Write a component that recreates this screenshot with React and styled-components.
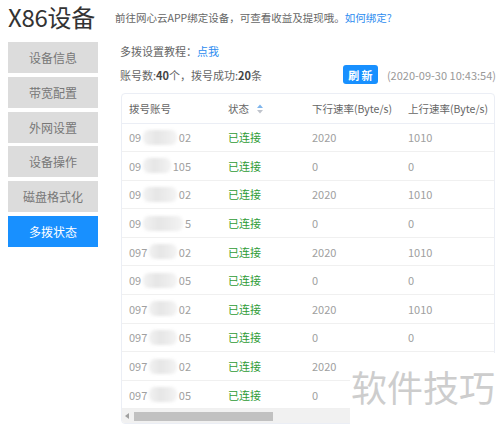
import React from "react";
import styled, { createGlobalStyle } from "styled-components";

const Global = createGlobalStyle`
  html, body { margin: 0; padding: 0; background: #fff; }
  body { font-family: "Noto Sans CJK SC", "Noto Sans", sans-serif; color: #666; }
  * { box-sizing: border-box; }
`;

const Page = styled.div`
  position: relative;
  width: 500px;
  height: 428px;
  overflow: hidden;
  padding: 0 4px 0 8px;
`;

const Header = styled.div`
  display: flex;
  align-items: center;
  height: 34px;
`;

const Title = styled.h1`
  margin: 0;
  width: 107px;
  font-size: 24px;
  font-weight: 400;
  color: #333;
  line-height: 34px;
  letter-spacing: -0.3px;
`;

const Notice = styled.span`
  font-size: 10.5px;
  color: #666;
`;

const Link = styled.a`
  color: #2d8cf0;
  text-decoration: none;
`;

const Body = styled.div`
  display: flex;
  gap: 22px;
  padding-top: 8px;
`;

const Sidebar = styled.nav`
  display: flex;
  flex-direction: column;
  gap: 3.8px;
  width: 90px;
  flex: none;
`;

const NavButton = styled.div`
  height: 31px;
  display: flex;
  align-items: center;
  justify-content: center;
  font-size: 12px;
  background: ${(p) => (p.$active ? "#1890ff" : "#dcdcdc")};
  color: ${(p) => (p.$active ? "#fff" : "#777")};
`;

const Content = styled.div`
  flex: 1;
  display: flex;
  flex-direction: column;
  min-width: 0;
`;

const InfoLine = styled.div`
  height: 18px;
  line-height: 18px;
  font-size: 11px;
  color: #666;
`;

const StatusBar = styled.div`
  margin-top: 5px;
  height: 19px;
  display: flex;
  align-items: center;
  justify-content: space-between;
  font-size: 11px;
`;

const Strong = styled.b`
  color: #444;
  font-weight: 700;
`;

const RightGroup = styled.div`
  display: flex;
  align-items: center;
  gap: 9px;
`;

const RefreshButton = styled.button`
  height: 19px;
  width: 35px;
  border: none;
  border-radius: 3px;
  background: #1890ff;
  color: #fff;
  font-family: inherit;
  font-size: 11px;
  font-weight: 700;
  padding: 0;
  white-space: pre;
`;

const Stamp = styled.span`
  color: #999;
  font-size: 11px;
`;

const TableCard = styled.div`
  margin-top: 9px;
  margin-left: 1px;
  margin-right: 1px;
  border: 1px solid #ebeef5;
  border-radius: 4px;
  overflow: hidden;
`;

const Table = styled.table`
  border-collapse: collapse;
  table-layout: fixed;
  width: 480px;
  font-size: 11px;
`;

const Th = styled.th`
  height: 29px;
  padding: 0 0 0 7px;
  text-align: left;
  font-weight: 400;
  font-size: 10.5px;
  color: #666;
  border-bottom: 1px solid #ebeef5;
  white-space: nowrap;
  overflow: hidden;
`;

const Td = styled.td`
  height: 28.6px;
  padding: 0 0 0 7px;
  color: ${(p) => (p.$ok ? "#2e9b35" : "#a0a0a0")};
  border-bottom: 1px solid #f0f0f0;
  white-space: nowrap;
`;

const Account = styled.span`
  display: inline-flex;
  align-items: center;
  width: 62px;
`;

const Blur = styled.span`
  flex: 1;
  height: 15px;
  margin: 0 2px;
  background: linear-gradient(90deg, #f2f2f2, #e6e6e6 40%, #ececec 70%, #f4f4f4);
  filter: blur(1.5px);
  border-radius: 6px;
`;

const SortIcon = styled.svg`
  margin-left: 8px;
  vertical-align: -1px;
`;

const Scrollbar = styled.div`
  height: 14px;
  background: #f1f1f1;
  display: flex;
  align-items: center;
  padding-left: 3px;
  gap: 5px;
`;

const Thumb = styled.div`
  width: 139px;
  height: 9px;
  background: #c1c1c1;
`;

const Watermark = styled.div`
  position: absolute;
  left: 350px;
  top: 353px;
  right: 0;
  bottom: 0;
  background: #fff;
  padding: 13px 0 0 1px;
  font-size: 36px;
  line-height: 40px;
  color: #cdcdcd;
  white-space: nowrap;
`;

const rows = [
  ["09", "02", "2020", "1010"],
  ["09", "105", "0", "0"],
  ["09", "02", "2020", "1010"],
  ["09", "5", "0", "0"],
  ["097", "02", "2020", "1010"],
  ["09", "05", "0", "0"],
  ["097", "02", "2020", "1010"],
  ["097", "05", "0", "0"],
  ["097", "02", "2020", ""],
  ["097", "05", "0", ""],
];

const nav = ["设备信息", "带宽配置", "外网设置", "设备操作", "磁盘格式化", "多拨状态"];

export default function App() {
  return (
    <Page>
      <Global />
      <Header>
        <Title>X86设备</Title>
        <Notice>
          前往网心云APP绑定设备，可查看收益及提现哦。<Link>如何绑定?</Link>
        </Notice>
      </Header>
      <Body>
        <Sidebar>
          {nav.map((n) => (
            <NavButton key={n} $active={n === "多拨状态"}>
              {n}
            </NavButton>
          ))}
        </Sidebar>
        <Content>
          <InfoLine>
            多拨设置教程：<Link>点我</Link>
          </InfoLine>
          <StatusBar>
            <span>
              账号数:<Strong>40</Strong>个，拨号成功:<Strong>20</Strong>条
            </span>
            <RightGroup>
              <RefreshButton>刷 新</RefreshButton>
              <Stamp>(2020-09-30 10:43:54)</Stamp>
            </RightGroup>
          </StatusBar>
          <TableCard>
            <Table>
              <colgroup>
                <col style={{ width: 99 }} />
                <col style={{ width: 84 }} />
                <col style={{ width: 96 }} />
                <col style={{ width: 101 }} />
                <col style={{ width: 100 }} />
              </colgroup>
              <thead>
                <tr>
                  <Th>拨号账号</Th>
                  <Th>
                    状态
                    <SortIcon width="6" height="10" viewBox="0 0 6 10">
                      <path d="M3 0.5 L6 4 L0 4 Z" fill="#7fb5ec" />
                      <path d="M3 9.5 L6 6 L0 6 Z" fill="#c0c4cc" />
                    </SortIcon>
                  </Th>
                  <Th>下行速率(Byte/s)</Th>
                  <Th>上行速率(Byte/s)</Th>
                  <Th></Th>
                </tr>
              </thead>
              <tbody>
                {rows.map((r, i) => (
                  <tr key={i}>
                    <Td>
                      <Account>
                        {r[0]}
                        <Blur />
                        {r[1]}
                      </Account>
                    </Td>
                    <Td $ok>已连接</Td>
                    <Td>{r[2]}</Td>
                    <Td>{r[3]}</Td>
                    <Td></Td>
                  </tr>
                ))}
              </tbody>
            </Table>
            <Scrollbar>
              <svg width="4" height="6" viewBox="0 0 4 6">
                <path d="M0 3 L4 0 L4 6 Z" fill="#a0a0a0" />
              </svg>
              <Thumb />
            </Scrollbar>
          </TableCard>
        </Content>
      </Body>
      <Watermark>软件技巧</Watermark>
    </Page>
  );
}
